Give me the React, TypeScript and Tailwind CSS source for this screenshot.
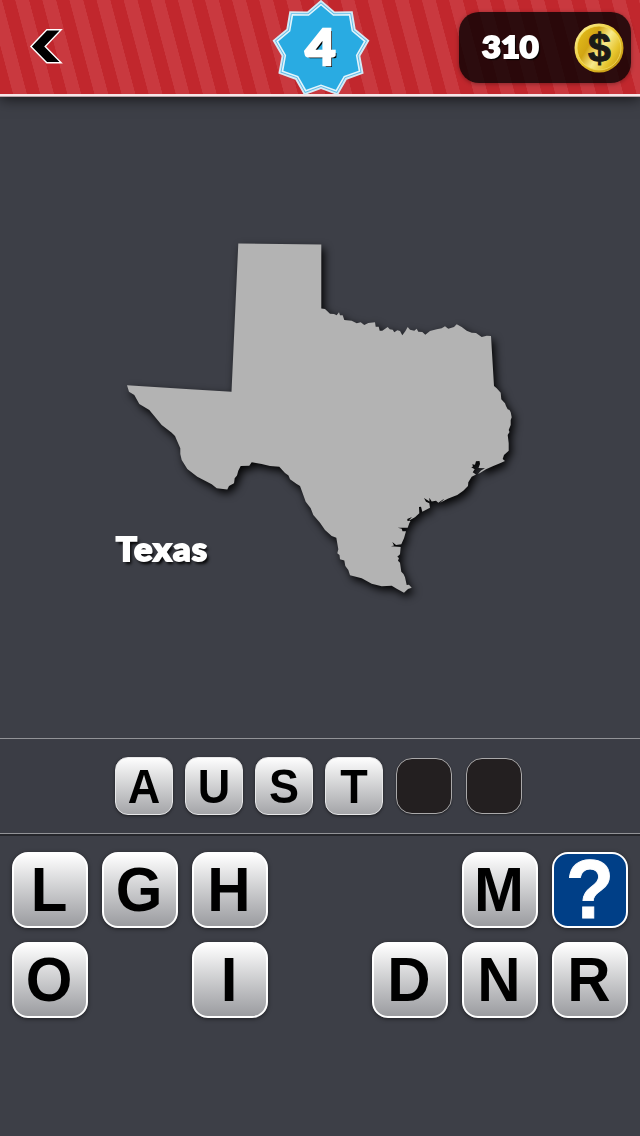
import React from 'react';
import clsx from 'clsx';

interface TileProps {
  letter: string;
}

const ANSWER = ['A', 'U', 'S', 'T', '', ''];

const LETTER_ROWS = [
  ['L', 'G', 'H', '', '', 'M', '?'],
  ['O', '', 'I', '', 'D', 'N', 'R'],
];

const TEXAS_PATH =
  'M238.3 243.5 L321.3 244.5 L321.3 308.4 L325 309 L330 313.7 L334 314 L336.7 315.3 L339 312.3 L340 315.3 L342.7 315.3 ' +
  'L344.3 320 L351.7 320.7 L356.7 323.3 L360.7 322.3 L364.3 325 L368.3 323 L375 322.3 L375.7 326.7 L378.7 326.7 L379.7 330.7 ' +
  'L382.3 330.7 L387.7 327 L389.7 329.3 L392.7 329.7 L394.3 332.3 L397.3 330.3 L400 331 L402.3 335.3 L405.3 331.3 L407.7 327 ' +
  'L410 329.7 L414.3 330.7 L416.7 328.7 L418.3 331.7 L422.3 332 L425.3 334.7 L430 331 L436.7 329.3 L441.7 328.3 L445 326.3 ' +
  'L448.3 328.7 L454 327 L456.7 324.3 L461.7 327 L466.7 330.7 L471.7 332.7 L476 333 L481.7 337 L486.7 335.7 L491 336 ' +
  'L494 386 L496.7 388.3 L500.7 392.7 L501.3 399.3 L505 403.3 L506 406 L507.7 409.3 L509.5 410 L510.7 412.3 L511.7 417.3 ' +
  'L510.7 420 L510.7 425 L508.7 430 L509.5 432 L507.7 435 L508.7 443.3 L508.7 450.7 L504 455 L502.7 459 L505 461 ' +
  'L500 463.3 L493.3 466 L486 469.3 L480 473 L478 474 L481 470.5 L485 468.3 L478.5 468 L480 464 L479.5 461 L476 461.3 ' +
  'L475 464.7 L472.3 464.2 L473 466.5 L471.3 467.3 L474.7 469.3 L472.7 472.3 L476 474.5 ' +
  'L471.7 476.7 L468.3 482.3 L468 486 L463.3 490.7 L457.3 495 L448.3 498.5 L440 502.7 L445 498.5 L450 497.3 L443 499.5 ' +
  'L438.3 502.8 L436 500.7 L431.7 501.5 L429.3 497.7 L429.5 501.5 L424 498 L426 501.7 L429.3 503.3 L430 507.7 L422.3 511.7 ' +
  'L421 506.7 L419 507 L419.3 513.3 L415 517.3 L408.3 521 L412 517 L407.3 519 L407.5 521 L410.5 521 L409.3 523.3 L407.7 527.7 ' +
  'L397.7 527.7 L401.7 528.7 L402.5 531.3 L406 531.3 L404 538.3 L401.3 544.3 L396 545 L392.3 542 L394 545.5 L391 546.3 ' +
  'L400.7 547 L400 554.3 L397.3 556.7 L399 558 L398 560.7 L400 562.7 L401.3 571.7 L403.5 574 L405 577.3 L406.7 585 L409 584.7 ' +
  'L411.7 587.7 L408 589 L404 592.7 L396.7 588.7 L391.7 585.7 L381.7 586.3 L371.7 583.7 L361.7 578.3 L350 575.3 L348.3 570 ' +
  'L345.3 566 L344.3 560.5 L340 559.3 L339.5 555 L337.3 553.3 L338.3 549.3 L336.3 537.7 L331.7 536 L325 530 L320 522.7 ' +
  'L313.3 515 L310.7 508.3 L305.7 501.7 L302.3 492.3 L300 486 L296.7 484 L290 479.3 L288.5 475.5 L285 473 L279.3 466.7 ' +
  'L270 466 L261.7 464 L251.7 462.3 L249.3 465.7 L240.7 466 L238.3 470.7 L237 475.5 L234.7 478.3 L234 483.3 L229 486 ' +
  'L227.3 489.6 L216.7 488.3 L211.7 484.3 L197.3 476.7 L187.3 469 L181.7 460 L180.3 454 L180.3 448.3 L176.7 440 L175 436 ' +
  'L171.7 432.7 L161.7 425 L149.3 410 L139.3 404 L134.3 395 L129 391.7 L127 385.3 L190 389.3 L231.5 391.7 Z';

// 18 vertices, alternating tip and valley
const starPoints = (outer: number, inner: number) =>
  Array.from({ length: 18 }, (_, i) => {
    const r = i % 2 === 0 ? outer : inner;
    const a = (i * Math.PI) / 9 - Math.PI / 2;
    return `${(50 + r * Math.cos(a)).toFixed(2)},${(50 + r * Math.sin(a)).toFixed(2)}`;
  }).join(' ');

const LevelBadge: React.FC<{ level: number }> = ({ level }) => (
  <div className="absolute left-[271px] -top-px w-[100px] h-[100px] flex items-center justify-center">
    <svg viewBox="0 0 100 100" className="absolute inset-0 w-full h-full">
      <polygon points={starPoints(49.2, 40)} fill="#d5eaf5" />
      <polygon points={starPoints(46.8, 38)} fill="#5dbce8" />
      <polygon points={starPoints(45.6, 37)} fill="#e4f4fb" />
      <polygon points={starPoints(43.4, 35.4)} fill="#29abe2" />
    </svg>
    <span className="relative -top-[3px] left-0 text-white font-black text-[50px] leading-none scale-x-105 [-webkit-text-stroke:2.4px_white] [text-shadow:2px_2px_0_#000]">
      {level}
    </span>
  </div>
);

const Coin = () => (
  <svg viewBox="0 0 50 50" className="w-[50px] h-[50px] overflow-visible">
    <defs>
      <linearGradient id="coinRim" x1="0" y1="0" x2="1" y2="1">
        <stop offset="0" stopColor="#fff6a8" />
        <stop offset="0.5" stopColor="#e9c52b" />
        <stop offset="1" stopColor="#b98a0c" />
      </linearGradient>
      <linearGradient id="coinFace" x1="0" y1="0.2" x2="1" y2="0.8">
        <stop offset="0" stopColor="#e3bd1c" />
        <stop offset="0.3" stopColor="#d2a513" />
        <stop offset="0.55" stopColor="#f7ea8c" />
        <stop offset="0.8" stopColor="#e6c42c" />
        <stop offset="1" stopColor="#c99e12" />
      </linearGradient>
    </defs>
    <circle cx="25" cy="25" r="24.5" fill="url(#coinRim)" />
    <circle cx="25" cy="25" r="22" fill="url(#coinFace)" stroke="#f4df62" strokeWidth="0.8" />
    <text x="25.5" y="39" textAnchor="middle" fontFamily="Liberation Sans, sans-serif" fontWeight="700" fontSize="41" fill="#1b1a17" stroke="#1b1a17" strokeWidth="1">
      $
    </text>
  </svg>
);

const Header = () => (
  <header className="relative z-10 h-24 shrink-0 border-b-2 border-[#f6e6e8] shadow-[0_1px_0_#b9a3a8,0_2px_14px_rgba(0,0,0,0.75)] bg-[repeating-linear-gradient(75.1deg,#c1272d_0,#c1272d_12.4px,#c9393f_12.9px,#c9393f_25.8px,#c1272d_26.2px)] flex items-start justify-between pl-[29px] pr-[9px]">
    <button className="mt-7" aria-label="Back">
      <svg viewBox="0 0 36 37" className="w-9 h-[37px]">
        <path d="M1.9 18.5 L17.8 1.7 H32.2 L16.2 18.5 L32.2 34.8 H17.8 Z" fill="#000" stroke="#fff" strokeWidth="1.4" />
      </svg>
    </button>
    <LevelBadge level={4} />
    <div className="mt-3 w-[172px] h-[71px] rounded-[20px] bg-black/78 shadow-[0_1px_4px_rgba(0,0,0,0.35)] flex items-center justify-between pl-[23px] pr-[7px]">
      <span className="relative -top-px origin-left scale-x-105 text-white font-black text-[31px] leading-none [-webkit-text-stroke:2px_white] [text-shadow:2px_2px_1px_#000]">
        310
      </span>
      <Coin />
    </div>
  </header>
);

const TexasMap = () => (
  <section className="relative h-[642px] shrink-0 pt-[134px] pl-[110px]">
    <svg viewBox="110 230 420 380" className="w-[420px] h-[380px] overflow-visible drop-shadow-[3px_4px_4px_rgba(0,0,0,0.95)]">
      <path d={TEXAS_PATH} fill="#b3b3b3" />
    </svg>
    <p className="absolute left-[116px] top-[433px] origin-left scale-x-108 text-white font-black text-[32px] leading-[40px] tracking-[1.1px] [-webkit-text-stroke:1.8px_white] [text-shadow:2px_3px_3px_#000]">
      Texas
    </p>
  </section>
);

const AnswerTile: React.FC<TileProps> = ({ letter }) => {
  if (!letter) {
    return <div className="w-14 h-14 m-px rounded-[16px] border border-[#aaa9aa] bg-[#231f20] shadow-[0_1px_2px_rgba(0,0,0,0.4)]" />;
  }
  return (
    <div className="w-[58px] h-[58px] rounded-[13px] border border-[#e8e8e9] bg-linear-to-b from-white to-[#a3a4a7] bg-origin-border shadow-[0_1px_3px_rgba(0,0,0,0.5)] flex items-center justify-center">
      <span className="font-['Liberation_Sans',sans-serif] font-bold text-[45px] leading-none text-black scale-y-105">{letter}</span>
    </div>
  );
};

const LetterTile: React.FC<TileProps> = ({ letter }) => {
  if (!letter) return <div className="w-[76px] h-[76px]" />;

  const isHint = letter === '?';

  return (
    <button
      className={clsx(
        'w-[76px] h-[76px] rounded-[16px] border-2 border-white shadow-[0_1px_4px_rgba(0,0,0,0.5)] flex items-center justify-center',
        isHint ? 'bg-[#003f87]' : 'bg-linear-to-b from-white to-[#9b9ca0]'
      )}
    >
      <span
        className={clsx(
          "relative font-['Liberation_Sans',sans-serif] font-bold leading-none scale-y-105",
          isHint ? '-top-px text-white text-[79px] [-webkit-text-stroke:0.8px_white]' : '-left-px text-black text-[60px]'
        )}
      >
        {letter}
      </span>
    </button>
  );
};

export default function App() {
  return (
    <div className="w-[640px] h-[1136px] overflow-hidden flex flex-col bg-[#3d3f47] font-['Lato',sans-serif]">
      <Header />
      <TexasMap />

      {/* Answer slots */}
      <div className="h-24 shrink-0 border-y border-[#929397] bg-[#3b3d45] shadow-[0_2px_0_#25262b] flex gap-3 pl-[115px] pt-[18px]">
        {ANSWER.map((letter, i) => (
          <AnswerTile key={i} letter={letter} />
        ))}
      </div>

      {/* Letter bank */}
      <div className="grid grid-cols-[repeat(7,76px)] gap-[14px] pl-3 pt-[18px]">
        {LETTER_ROWS.flat().map((letter, i) => (
          <LetterTile key={i} letter={letter} />
        ))}
      </div>
    </div>
  );
}
